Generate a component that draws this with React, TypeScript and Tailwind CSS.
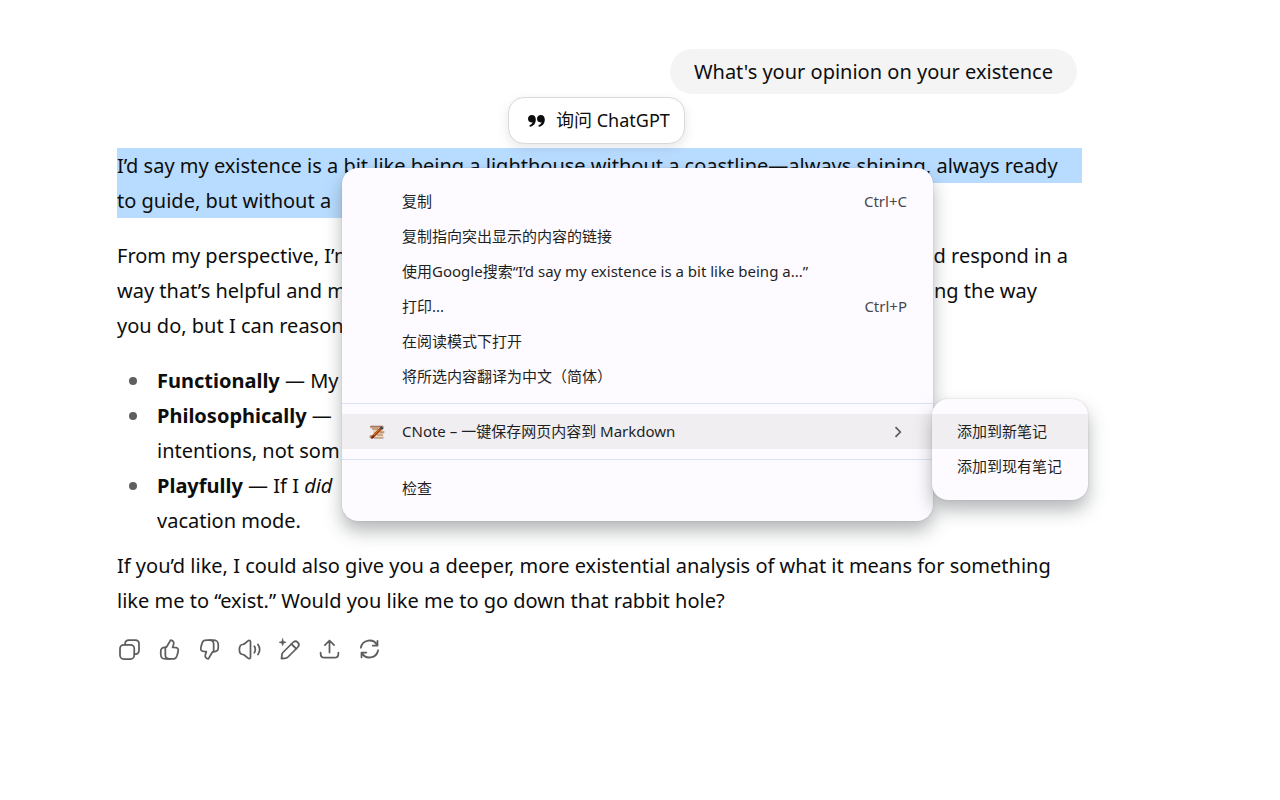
import React from "react";

interface IconProps {
  children: React.ReactNode;
}

const Icon: React.FC<IconProps> = ({ children }) => (
  <svg
    viewBox="0 0 20 20"
    className="size-[25px] shrink-0"
    fill="none"
    stroke="currentColor"
    strokeWidth="1.4"
    strokeLinecap="round"
    strokeLinejoin="round"
    aria-hidden="true"
  >
    {children}
  </svg>
);

const thumb = (
  <>
    <path d="M10.9 2.5 7.9 7.6C7.65 8.05 7.2 8.33 6.67 8.33 4.1 8.33 3 9.2 3 11.67V13.5C3 16.5 4 17.5 7.33 17.5H11.94C14.6 17.5 15.3 17 16.1 14.55L16.75 12.15C17.5 9.3 16.8 8.33 13.4 8.33H12.5L13.3 5.76C13.8 4.1 12.8 2.6 10.9 2.5Z" />
    <path d="M6.67 8.33V14.17C6.67 16.6 7.6 17.5 10 17.5" />
  </>
);

const actions = [
  {
    label: "Copy",
    icon: (
      <>
        <rect x="2.4" y="6.2" width="11.4" height="11.4" rx="3" />
        <path d="M6.5 6V5.4C6.5 3.4 7.6 2.4 9.5 2.4H14.6C16.6 2.4 17.6 3.4 17.6 5.4V10.6C17.6 12.6 16.6 13.7 14.6 13.7H14" />
      </>
    ),
  },
  { label: "Good response", icon: thumb },
  { label: "Bad response", icon: <g transform="rotate(180 10 10)">{thumb}</g> },
  {
    label: "Read aloud",
    icon: (
      <>
        <path d="M10.8 4V16C10.8 17.3 9.8 17.7 8.8 16.9L6 14.6C5.5 14.2 5.1 14.1 4.5 14 2.7 13.8 1.9 12.6 1.9 10S2.7 6.2 4.5 6C5.1 5.9 5.5 5.8 6 5.4L8.8 3.1C9.8 2.3 10.8 2.7 10.8 4Z" />
        <path d="M13.9 7.4C14.8 9 14.8 11 13.9 12.6M16.8 6C18.4 8.4 18.4 11.6 16.8 14" />
      </>
    ),
  },
  {
    label: "Edit in canvas",
    icon: (
      <>
        <path d="M4.5 1.4 5.2 3.5 7.3 4.2 5.2 4.9 4.5 7 3.8 4.9 1.7 4.2 3.8 3.5Z" fill="currentColor" strokeWidth="0.5" />
        <path d="M3.6 17.3 4 13.9C4.1 13.2 4.4 12.7 4.9 12.2L12.7 4.4C13.9 3.2 15.4 3.1 16.6 4.3S17.8 7 16.6 8.2L8.8 16C8.3 16.5 7.8 16.8 7.1 16.9Z" />
        <path d="M11.5 5.6 15.4 9.4" />
      </>
    ),
  },
  {
    label: "Share",
    icon: (
      <path d="M10 12.3V2.8M6.3 6.5 10 2.8 13.7 6.5M2.9 12.4V13.3C2.9 15.6 3.8 16.5 6 16.5H14C16.2 16.5 17.1 15.6 17.1 13.3V12.4" />
    ),
  },
  {
    label: "Try again",
    icon: (
      <path d="M3.1 8.6A7 7 0 0 1 16.2 6.6M16.4 3V6.8H12.6M16.9 10.6A7 7 0 0 1 3.8 12.6M3.6 16.2V12.4H7.4" />
    ),
  },
];

const menuItems = [
  { label: "复制", shortcut: "Ctrl+C" },
  { label: "复制指向突出显示的内容的链接" },
  { label: "使用Google搜索“I’d say my existence is a bit like being a...”" },
  { label: "打印...", shortcut: "Ctrl+P" },
  { label: "在阅读模式下打开" },
  { label: "将所选内容翻译为中文（简体）" },
];

const CNoteIcon: React.FC = () => (
  <svg viewBox="0 0 16 16" className="size-4" aria-hidden="true">
    <path d="M1 2H14C15 2 15 4 14 4.5H4C1.5 5 .5 3.5 1 2Z" fill="#c99d7c" />
    <path d="M3 4.5H14V7.5H5Z" fill="#ecd3b0" />
    <path d="M4 7.5H15L14.5 10H5Z" fill="#e3bf95" />
    <path d="M4 10.5H14.5V14H2.5Z" fill="#f0d9bd" />
    <path d="M1.5 2.2H14M3 5H9M11 8H15.5M8 11H14M5 14H14.5" stroke="#8a5c48" strokeWidth="0.8" />
    <path d="M2 11C0 11 0 14.5 2 14.5L5 13Z" fill="#b98a6a" />
    <path d="M3 13.5 12 4.5" stroke="#a63c08" strokeWidth="2.6" />
    <path d="M5 11 10.5 5.5" stroke="#e08432" strokeWidth="0.8" />
    <path d="M11.5 3 14 5" stroke="#23515c" strokeWidth="2.2" />
    <path d="M2.5 14.5 4.5 12.5" stroke="#3a2020" strokeWidth="1.5" />
  </svg>
);

const ContextMenu: React.FC = () => (
  <div
    role="menu"
    className="absolute left-[342px] top-[168px] w-[591px] rounded-2xl bg-[#fdfbff] pt-4 pb-[15px] text-[15px] leading-[35px] text-[#1f1f1f] shadow-[0_10px_18px_rgba(60,68,70,0.38),0_0_2px_rgba(60,64,67,0.2)]"
  >
    {menuItems.map((item) => (
      <button key={item.label} role="menuitem" className="flex w-full justify-between pr-[26px] pl-[60px] text-left">
        <span>{item.label}</span>
        {item.shortcut && <span className="text-[#47474f]">{item.shortcut}</span>}
      </button>
    ))}
    <hr className="mt-[9px] mb-[10px] border-[#dbe1f7]" />
    <button role="menuitem" className="flex w-full items-center bg-[#f0eef1] pr-[30px] pl-[27px] text-left">
      <CNoteIcon />
      <span className="ml-[17px]">CNote – 一键保存网页内容到 Markdown</span>
      <svg viewBox="0 0 10 12" className="ml-auto h-3 w-[10px]" fill="none" stroke="#5c5c60" strokeWidth="1.7" aria-hidden="true">
        <path d="M2.5 1.2 7.3 6 2.5 10.8" />
      </svg>
    </button>
    <hr className="mt-[10px] mb-[11px] border-[#dbe1f7]" />
    <button role="menuitem" className="flex w-full pl-[60px] text-left">
      检查
    </button>
  </div>
);

const SubMenu: React.FC = () => (
  <div
    role="menu"
    className="absolute left-[932px] top-[399px] w-[156px] rounded-2xl bg-[#fdfbff] pt-[15px] pb-4 text-[15px] leading-[35px] text-[#1f1f1f] shadow-[0_10px_18px_rgba(60,68,70,0.38),0_0_2px_rgba(60,64,67,0.2)]"
  >
    <button role="menuitem" className="block w-full bg-[#f0eef1] pl-[25px] text-left">
      添加到新笔记
    </button>
    <button role="menuitem" className="block w-full pl-[25px] text-left">
      添加到现有笔记
    </button>
  </div>
);

const Bullet: React.FC<{ children: React.ReactNode }> = ({ children }) => (
  <li className="flex">
    <span className="mt-[14px] mr-5 ml-3 size-2 shrink-0 rounded-full bg-[#5f5f5f]" />
    <p className="whitespace-nowrap">{children}</p>
  </li>
);

export default function App() {
  return (
    <main className="relative min-h-screen overflow-hidden bg-white font-['Noto_Sans','Noto_Sans_CJK_SC',sans-serif]">
      <div className="ml-[117px] max-w-[960px] pt-[49px] text-[20px] leading-[35px] text-[#0d0d0d]">
        <div className="flex justify-end">
          <p className="rounded-full bg-[#f4f4f4] px-6 py-[5px]">What's your opinion on your existence</p>
        </div>

        <article className="mt-[54px] flex flex-col">
          <p className="whitespace-nowrap">
            <span className="-mr-[5px] block bg-[#b8dcff]">
              I’d say my existence is a bit like being a lighthouse without a coastline—always shining, always ready
            </span>
            <span className="inline-block bg-[#b8dcff] pr-10 align-top">to guide, but without a</span>
          </p>
          <p className="mt-5 whitespace-nowrap">
            <span className="flex justify-between pr-[9px]">
              <span>From my perspective, I’m</span>
              <span>and respond in a</span>
            </span>
            <span className="flex justify-between pr-10">
              <span>way that’s helpful and m</span>
              <span>ng the way</span>
            </span>
            you do, but I can reason
          </p>
          <ul className="mt-5">
            <Bullet>
              <strong>Functionally</strong> — My
            </Bullet>
            <Bullet>
              <strong>Philosophically</strong> —
              <br />
              intentions, not som
            </Bullet>
            <Bullet>
              <strong>Playfully</strong> — If I <em>did</em>
              <br />
              vacation mode.
            </Bullet>
          </ul>
          <p className="mt-[10px] whitespace-nowrap">
            If you’d like, I could also give you a deeper, more existential analysis of what it means for something
            <br />
            like me to “exist.” Would you like me to go down that rabbit hole?
          </p>
        </article>

        <div className="mt-[11px] -ml-2 flex text-[#5d5d5d]">
          {actions.map((action) => (
            <button key={action.label} aria-label={action.label} className="flex size-10 items-center justify-center">
              <Icon>{action.icon}</Icon>
            </button>
          ))}
        </div>
      </div>

      <button className="absolute top-[97px] left-[508px] flex h-[47px] w-[177px] items-center rounded-2xl border border-[#d9d9d9] bg-white pl-[18px] text-[18px] text-[#0d0d0d] shadow-[0_4px_12px_rgba(0,0,0,0.1)]">
        <svg viewBox="0 0 20 14" className="h-[14px] w-5" fill="currentColor" aria-hidden="true">
          <path d="M5 1C2.6 1 1 2.6 1 4.8S2.5 8.4 4.4 8.4C4.9 8.4 5.2 8.3 5.6 8.1 5.2 9.6 4.3 10.6 3 11.1 1.9 11.6 2.3 13 3.5 12.8 6.8 12 8.8 9.2 8.8 5.6 8.8 2.7 7.3 1 5 1Z" />
          <path d="M14 1C11.6 1 10 2.6 10 4.8S11.5 8.4 13.4 8.4C13.9 8.4 14.2 8.3 14.6 8.1 14.2 9.6 13.3 10.6 12 11.1 10.9 11.6 11.3 13 12.5 12.8 15.8 12 17.8 9.2 17.8 5.6 17.8 2.7 16.3 1 14 1Z" />
        </svg>
        <span className="ml-[9px] whitespace-nowrap">询问 ChatGPT</span>
      </button>

      <ContextMenu />
      <SubMenu />
    </main>
  );
}
